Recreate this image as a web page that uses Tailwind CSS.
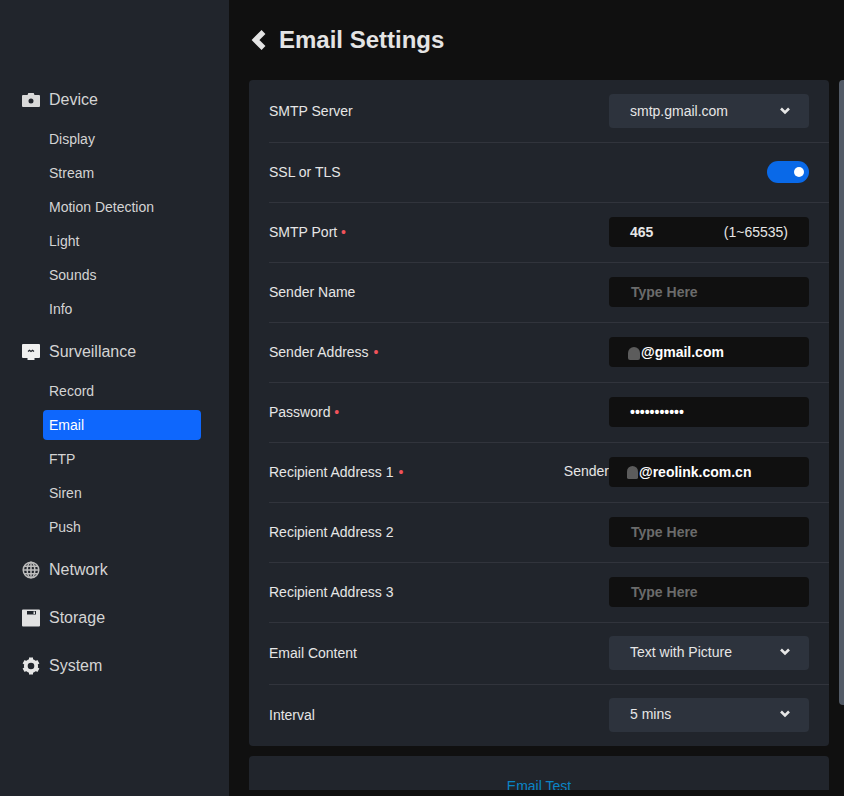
<!DOCTYPE html>
<html lang="en">
<head>
    <meta charset="UTF-8">
    <title>Email Settings</title>
    <script src="https://cdn.jsdelivr.net/npm/@tailwindcss/browser@4"></script>
</head>
<body class="bg-[#101010] font-['Liberation_Sans',Arial,sans-serif] h-[796px] w-[844px] overflow-hidden flex">

    <!-- sidebar -->
    <aside class="w-[229px] h-[796px] shrink-0 bg-[#21252c] pt-[82px] text-[#d4d4d4]">
        <div class="h-[36px] pl-[22px] flex items-center gap-[9px] text-base">
            <svg class="w-[18px] h-[18px]" viewBox="0 0 18 18"><path fill="#d9d9d9" fill-rule="evenodd" d="M1 4h4.500l.8-2h5.400l.8 2H17a1 1 0 0 1 1 1v10a1 1 0 0 1-1 1H1a1 1 0 0 1-1-1V5a1 1 0 0 1 1-1zM9 7.500a2.500 2.500 0 1 0 0 5 2.500 2.500 0 0 0 0-5z"/></svg>
            <span>Device</span>
        </div>
        <div class="pl-[43px] pr-[28px] mt-[6px] text-sm">
            <div class="h-[30px] mb-[4px] pl-[6px] rounded flex items-center">Display</div>
            <div class="h-[30px] mb-[4px] pl-[6px] rounded flex items-center">Stream</div>
            <div class="h-[30px] mb-[4px] pl-[6px] rounded flex items-center">Motion Detection</div>
            <div class="h-[30px] mb-[4px] pl-[6px] rounded flex items-center">Light</div>
            <div class="h-[30px] mb-[4px] pl-[6px] rounded flex items-center">Sounds</div>
            <div class="h-[30px] mb-[4px] pl-[6px] rounded flex items-center">Info</div>
        </div>
        <div class="h-[36px] mt-[10px] pl-[22px] flex items-center gap-[9px] text-base">
            <svg class="w-[18px] h-[18px]" viewBox="0 0 18 18"><path fill="#f0f0f0" d="M1 1h16a1 1 0 0 1 1 1v12a1 1 0 0 1-1 1H1a1 1 0 0 1-1-1V2a1 1 0 0 1 1-1z"/><path fill="#f0f0f0" d="M5.500 15h7v2h-7z"/><path fill="none" stroke="#21252c" stroke-width="1.300" d="M6 8.500l1.500-1.200L9 8.500l1.500-1.200 1.500 1.200"/></svg>
            <span>Surveillance</span>
        </div>
        <div class="pl-[43px] pr-[28px] mt-[6px] text-sm">
            <div class="h-[30px] mb-[4px] pl-[6px] rounded flex items-center">Record</div>
            <div class="h-[30px] mb-[4px] pl-[6px] rounded flex items-center bg-[#0e67fd] text-white">Email</div>
            <div class="h-[30px] mb-[4px] pl-[6px] rounded flex items-center">FTP</div>
            <div class="h-[30px] mb-[4px] pl-[6px] rounded flex items-center">Siren</div>
            <div class="h-[30px] mb-[4px] pl-[6px] rounded flex items-center">Push</div>
        </div>
        <div class="h-[36px] mt-[10px] pl-[22px] flex items-center gap-[9px] text-base">
            <svg class="w-[18px] h-[18px]" viewBox="0 0 18 18" fill="none" stroke="#bdbdbd" stroke-width="1.500"><circle cx="9" cy="9" r="7.800"/><ellipse cx="9" cy="9" rx="3.800" ry="7.800"/><path d="M9 1v16M1 9h16M2 5.200h14M2 12.800h14"/></svg>
            <span>Network</span>
        </div>
        <div class="h-[36px] mt-[12px] pl-[22px] flex items-center gap-[9px] text-base">
            <svg class="w-[18px] h-[18px]" viewBox="0 0 18 18"><path fill="#e2e2e2" fill-rule="evenodd" d="M1 .5h16a1 1 0 0 1 1 1V16.500a1 1 0 0 1-1 1H1a1 1 0 0 1-1-1V1.500a1 1 0 0 1 1-1zM5 2v3.500h9V2zM11.500 2.500h1.500v2.500h-1.500z"/></svg>
            <span>Storage</span>
        </div>
        <div class="h-[36px] mt-[12px] pl-[22px] flex items-center gap-[9px] text-base">
            <svg class="w-[18px] h-[18px]" viewBox="0 0 18 18" fill="none" stroke="#e6e6e6"><circle cx="9" cy="9" r="5.200" stroke-width="3.800"/><path stroke-width="4" d="M9 .5v3M9 14.500v3M1.600 4.700l2.600 1.500M13.800 11.800l2.600 1.500M16.400 4.700l-2.600 1.500M4.200 11.800l-2.600 1.500"/></svg>
            <span>System</span>
        </div>
    </aside>

    <!-- main -->
    <main class="flex-1 h-[790px] overflow-hidden pl-[20px] relative">
        <div class="h-[80px] flex items-center gap-[11px]">
            <svg class="w-[19px] h-[20px]" viewBox="0 0 19 20"><path fill="none" stroke="#e4e4e4" stroke-width="5.500" d="M14.500 2L6.500 10l8 8"/></svg>
            <h1 class="text-2xl font-bold text-[#e4e4e4]">Email Settings</h1>
        </div>

        <div class="w-[580px] bg-[#21252c] rounded text-sm text-[#e6e6e6] pl-[20px]">
            <div class="h-[63px] flex items-center justify-between border-b border-[#31343c] pr-[20px]">
                <span>SMTP Server</span>
                <div class="w-[200px] h-[34px] bg-[#2d333d] rounded pl-[21px] pr-[18px] flex items-center justify-between">
                    <span>smtp.gmail.com</span>
                    <svg class="w-[12px] h-[8px]" viewBox="0 0 12 8"><path fill="none" stroke="#e6e6e6" stroke-width="2.600" d="M2 1.500L6 5.500l4-4"/></svg>
                </div>
            </div>
            <div class="h-[60px] pb-[1px] flex items-center justify-between border-b border-[#31343c] pr-[20px]">
                <span>SSL or TLS</span>
                <div class="w-[42px] h-[22px] rounded-full bg-[#0969e8] flex items-center justify-end pr-[5px]">
                    <div class="w-[10px] h-[10px] rounded-full bg-white"></div>
                </div>
            </div>
            <div class="h-[60px] pb-[1px] flex items-center justify-between border-b border-[#31343c] pr-[20px]">
                <span>SMTP Port <span class="text-[#f1535b]">•</span></span>
                <div class="w-[200px] h-[30px] bg-[#101010] rounded pl-[21px] pr-[21px] flex items-center justify-between">
                    <span class="font-bold">465</span>
                    <span>(1~65535)</span>
                </div>
            </div>
            <div class="h-[60px] pb-[1px] flex items-center justify-between border-b border-[#31343c] pr-[20px]">
                <span>Sender Name</span>
                <div class="w-[200px] h-[30px] bg-[#101010] rounded pl-[22px] flex items-center font-bold text-[#6b6b6b]">Type Here</div>
            </div>
            <div class="h-[60px] pb-[1px] flex items-center justify-between border-b border-[#31343c] pr-[20px]">
                <span>Sender Address <span class="text-[#f1535b] ml-[1px]">•</span></span>
                <div class="w-[200px] h-[30px] bg-[#101010] rounded pl-[19px] flex items-center font-bold text-white">
                    <span class="w-[12px] h-[13px] mt-[3px] rounded-t-[6px] rounded-b-[2px] bg-[#5c5c5c] mr-[1px]"></span><span>@gmail.com</span>
                </div>
            </div>
            <div class="h-[60px] pb-[1px] flex items-center justify-between border-b border-[#31343c] pr-[20px]">
                <span>Password <span class="text-[#f1535b]">•</span></span>
                <div class="w-[200px] h-[30px] bg-[#101010] rounded pl-[21px] flex items-center font-bold text-white">•••••••••••</div>
            </div>
            <div class="h-[60px] pb-[1px] flex items-center justify-between border-b border-[#31343c] pr-[20px]">
                <span>Recipient Address 1 <span class="text-[#f1535b] ml-[1px]">•</span></span>
                <div class="flex items-center">
                    <span class="pb-[2px]">Sender</span>
                    <div class="w-[200px] h-[30px] bg-[#101010] rounded pl-[18px] flex items-center font-bold text-white">
                        <span class="w-[11px] h-[13px] mt-[1px] rounded-t-[6px] rounded-b-[2px] bg-[#5c5c5c] mr-[1px]"></span><span>@reolink.com.cn</span>
                    </div>
                </div>
            </div>
            <div class="h-[60px] pb-[1px] flex items-center justify-between border-b border-[#31343c] pr-[20px]">
                <span>Recipient Address 2</span>
                <div class="w-[200px] h-[30px] bg-[#101010] rounded pl-[22px] flex items-center font-bold text-[#6b6b6b]">Type Here</div>
            </div>
            <div class="h-[60px] pb-[1px] flex items-center justify-between border-b border-[#31343c] pr-[20px]">
                <span>Recipient Address 3</span>
                <div class="w-[200px] h-[30px] bg-[#101010] rounded pl-[22px] flex items-center font-bold text-[#6b6b6b]">Type Here</div>
            </div>
            <div class="h-[62px] pb-[1px] flex items-center justify-between border-b border-[#31343c] pr-[20px]">
                <span>Email Content</span>
                <div class="w-[200px] h-[34px] bg-[#2d333d] rounded pl-[21px] pr-[18px] pb-[2px] flex items-center justify-between">
                    <span>Text with Picture</span>
                    <svg class="w-[12px] h-[8px]" viewBox="0 0 12 8"><path fill="none" stroke="#e6e6e6" stroke-width="2.600" d="M2 1.500L6 5.500l4-4"/></svg>
                </div>
            </div>
            <div class="h-[61px] pb-[1px] flex items-center justify-between pr-[20px]">
                <span>Interval</span>
                <div class="w-[200px] h-[34px] bg-[#2d333d] rounded pl-[21px] pr-[18px] pb-[2px] flex items-center justify-between">
                    <span>5 mins</span>
                    <svg class="w-[12px] h-[8px]" viewBox="0 0 12 8"><path fill="none" stroke="#e6e6e6" stroke-width="2.600" d="M2 1.500L6 5.500l4-4"/></svg>
                </div>
            </div>
        </div>

        <div class="w-[580px] h-[60px] mt-[10px] bg-[#21252c] rounded pt-[20px] text-center text-sm text-[#0a84c6]">Email Test</div>

        <!-- scrollbar -->
        <div class="absolute left-[610px] top-[80px] w-[5px] h-[625px] bg-[#525a66] rounded-l"></div>
    </main>

</body>
</html>
